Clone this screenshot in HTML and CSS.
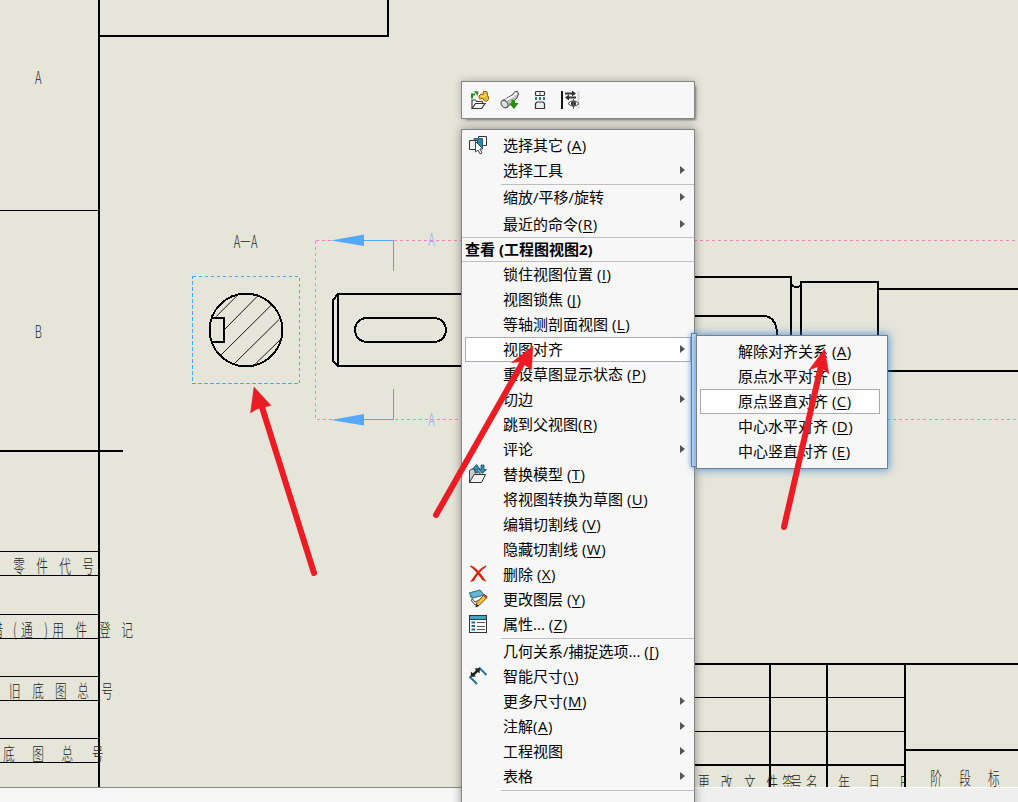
FILE: index.html
```html
<!DOCTYPE html>
<html lang="zh-CN">
<head>
<meta charset="utf-8">
<title>工程图</title>
<link rel="stylesheet" href="styles.css">
</head>
<body>
<main class="workspace">
  <svg class="sheet" viewBox="0 0 1018 802" width="1018" height="802">
    <defs>
      <clipPath id="sheet-area"><rect width="1018" height="787"/></clipPath>
      <clipPath id="date-cell"><rect x="828" y="766" width="77" height="21"/></clipPath>
    </defs>
    <!-- sheet frame and title blocks -->
    <g class="thick">
      <path d="M99 0V787M99 36H389M388 0V36M0 451H123"/>
      <path d="M690 664H1018M770 664V787M827 664V787M905 664V787M690 765H905M905 750H1018"/>
    </g>
    <path class="thin" d="M0 210.500H98M0 551.500H98M0 575.500H98M0 614.500H98M0 638.500H98M0 676.500H98M0 700.500H98M0 738.500H98M0 762.500H98M690 697.500H905M690 731.500H905"/>
    <!-- view boundaries -->
    <path class="boundary-pink" d="M315.500 240.500H1018M315.500 240.500V419.500H1018"/>
    <path class="boundary-blue" d="M192.500 276.500H299.500V383.500H192.500Z"/>
    <!-- section A-A -->
    <path class="hatch" d="M216 316.700L236.700 296M225 329L257.300 296.300M220.700 355.300L271.700 304.700M235 363L279.300 319.300M255.300 364L281.300 338.700"/>
    <g class="part">
      <circle cx="246" cy="330" r="36.300"/>
      <path d="M212 318H224V342H212"/>
      <!-- shaft -->
      <path d="M470 294H338L333 300V361L338 366H470M338 294V366"/>
      <rect x="355" y="318" width="91" height="24" rx="12"/>
      <path d="M690 277H791V350M791 284Q796 290 801 285M801 350V282H878V350M878 289H1018M878 371H1018M690 316H765Q777 318 777 335"/>
    </g>
    <!-- section cutting line -->
    <path class="cut" d="M362 240.500H393.500V271M362 419.500H393.500V389"/>
    <path class="cut-head" d="M331 240.500L364 234.500V246ZM331 420L364 414V425.500Z"/>
    <!-- drawing notes -->
    <g class="note" transform="scale(.65 1)">
      <text class="latin" x="59" y="84">A</text>
      <text class="latin" x="59" y="338">B</text>
      <text class="latin" x="364.500 377.500 391" y="248">A—A</text>
      <text class="latin pale" x="664" y="246">A</text>
      <text class="latin pale" x="664" y="426">A</text>
      <text x="29.200 64.600 100 135.400" y="573">零件代号</text>
      <text x="-4.600 23 41.500 70.800 89.200 124.600 161.500 195.400" y="637">借(通)用件登记</text>
      <text x="23 58.500 93.800 127.700 164.600" y="698">旧底图总号</text>
      <text x="13.800 58.500 103.800 150" y="761">底图总号</text>
    </g>
    <g clip-path="url(#sheet-area)">
      <g class="note" transform="scale(.65 1)">
        <text x="1083 1117.700 1153.800 1187.700 1212.300 1224.600 1249.200" y="790">更改文件签号名</text>
        <text x="1440 1484.600 1529.200" y="785">阶段标</text>
      </g>
    </g>
    <g clip-path="url(#date-cell)">
      <g class="note" transform="scale(.65 1)"><text x="1298.500 1344.600 1392" y="790">年月日</text></g>
    </g>
    <rect class="foot-left" y="787" width="470" height="15"/>
    <rect class="foot-right" x="690" y="787" width="328" height="15"/>
    <path class="foot-line" d="M0 787.500H470"/>
    <path class="foot-light" d="M690 787.500H1018"/>
  </svg>

  <section class="toolbar">
    <svg class="icon" viewBox="0 0 20 20">
      <path d="M2 8.500V4.500H5" fill="none" stroke="#278a16" stroke-width="2"/>
      <path d="M4 1L8.500 1.500L7.500 6Z" fill="#278a16"/>
      <path d="M2 18V10H5.500L6.500 11.500H12.500V13" fill="#fff" stroke="#444" stroke-width="1.200"/>
      <path d="M2 18.500L5.500 13.500H15L11.500 18.500Z" fill="#f4f4f4" stroke="#333" stroke-width="1.200"/>
      <path d="M9 6L11 4L13 4.500L13.500 1.500H16.500L17.500 3V5.500L18.500 7V9.500L16.500 11.500L14 10.500L13 8.500L10.500 9L9 8Z" fill="#efb62a" stroke="#96680b"/>
      <path d="M11 6L14 6.500L16 4" fill="none" stroke="#ffe296" stroke-width="1.200"/>
    </svg>
    <svg class="icon" viewBox="0 0 20 20">
      <path d="M2 11L12 5L15 1.500L17.500 1.500L18.500 4L17 8L7 17.500Z" fill="#bdbdbd" stroke="#555"/>
      <path d="M5 10.500L13 6.500L16.500 3" fill="none" stroke="#fff" stroke-width="2"/>
      <ellipse cx="4.500" cy="14" rx="3" ry="4" transform="rotate(-35 4.500 14)" fill="#ddd" stroke="#555"/>
      <path d="M11.500 9L15 11V13H18.500L14 19L9 13.500H11.500Z" fill="#258f0c"/>
    </svg>
    <svg class="icon" viewBox="0 0 20 20">
      <rect x="5.500" y="1.500" width="9" height="4" rx="1" fill="#fff" stroke="#333" stroke-width="1.200"/>
      <path d="M10 2V5" stroke="#555"/>
      <path d="M5 8.500H16" stroke="#237da0" stroke-width="3" stroke-dasharray="2 2"/>
      <path d="M5.500 18.500V13.500L7 12H13L14.500 13.500V18.500Z" fill="#eee" stroke="#333" stroke-width="1.200"/>
    </svg>
    <svg class="icon" viewBox="0 0 20 20">
      <path d="M2 1V19" stroke="#111" stroke-width="2"/>
      <path d="M18.500 1V19" stroke="#d6d6d6" stroke-width="2"/>
      <path d="M5 3.500H14M7 7.500H16" stroke="#333" stroke-width="1.800"/>
      <path d="M12 .5L16 3.500L12 6.500ZM9 4.500L5 7.500L9 10.500Z" fill="#333"/>
      <path d="M8 13.500Q13.500 8 19 13.500Q13.500 19 8 13.500Z" fill="#fff" stroke="#444"/>
      <circle cx="13.500" cy="13.500" r="2.500" fill="#333"/><path d="M13.500 9V19" stroke="#555"/>
    </svg>
  </section>

  <nav class="menu">
    <div class="item"><span class="slot"><svg class="icon" viewBox="0 0 20 20">
      <path d="M10.500 1.500H18.500V10.500H10.500Z" fill="#fff" stroke="#333"/>
      <path d="M6 3.500H14.500V13H6Z" fill="#2d86ad" stroke="#2a6580"/>
      <path d="M1.500 5.500H9.500V14.500H1.500Z" fill="#f2f2f2" stroke="#333"/>
      <path d="M7.500 6.500V17L10 15L12 19L14 18L12 14H15Z" fill="#fff" stroke="#444"/>
    </svg></span>选择其它 <span class="key">(<u>A</u>)</span></div>
    <div class="item sub">选择工具</div>
    <hr class="rule inset">
    <div class="item sub">缩放/平移/旋转</div>
    <div class="item sub spaced">最近的命令<span class="key">(<u>R</u>)</span></div>
    <hr class="rule">
    <h2 class="heading">查看 (工程图视图2)</h2>
    <hr class="rule">
    <div class="item">锁住视图位置 <span class="key">(<u>I</u>)</span></div>
    <div class="item">视图锁焦 <span class="key">(<u>J</u>)</span></div>
    <div class="item">等轴测剖面视图 <span class="key">(<u>L</u>)</span></div>
    <div class="item sub active">视图对齐</div>
    <div class="item">重设草图显示状态 <span class="key">(<u>P</u>)</span></div>
    <div class="item sub">切边</div>
    <div class="item">跳到父视图<span class="key">(<u>R</u>)</span></div>
    <div class="item sub">评论</div>
    <div class="item"><span class="slot"><svg class="icon" viewBox="0 0 20 20">
      <path d="M1.500 18.500V6.500L4 5H7V8H12V18Z" fill="#ccc" stroke="#444"/>
      <path d="M1.500 18.500L6 10.500H17.500L13.500 18.500Z" fill="#f2f2f2" stroke="#333"/>
      <path d="M7 9V5H4.500L8.500 .5L12 5H10V8ZM13 1H16V5.500H18.500L14.500 9.500L11 5.500H13Z" fill="#348eac" stroke="#164f69" stroke-width=".8"/>
    </svg></span>替换模型 <span class="key">(<u>T</u>)</span></div>
    <div class="item">将视图转换为草图 <span class="key">(<u>U</u>)</span></div>
    <div class="item">编辑切割线 <span class="key">(<u>V</u>)</span></div>
    <div class="item">隐藏切割线 <span class="key">(<u>W</u>)</span></div>
    <div class="item"><span class="slot"><svg class="icon" viewBox="0 0 20 20">
      <path d="M2.500 2Q8 3 17 16.500L14.500 15.500Q8 6 2.500 2ZM18 2Q11 5 3.500 17L5.500 16.500Q10 8 18 2Z" fill="#d9230b" stroke="#d9230b" stroke-width="1.200"/>
    </svg></span>删除 <span class="key">(<u>X</u>)</span></div>
    <div class="item"><span class="slot"><svg class="icon" viewBox="0 0 20 20">
      <path d="M3 11L7 16L17 10L14 7Z" fill="#ddd" stroke="#555"/>
      <path d="M2 7L7 13L17 8L13 4Z" fill="#fff" stroke="#555"/>
      <path d="M1 4L12 1L16 6L5 9Z" fill="#69b4d1" stroke="#286982"/>
      <path d="M8 17.500L9 13.500L15.500 6.500L18.500 9L11.500 16Z" fill="#f5c636" stroke="#69511d"/>
      <path d="M15 6.500L16.500 5L19.500 7.500L18.500 9.500Z" fill="#d7322b"/><path d="M7.500 18.500L8.500 15L11 17Z" fill="#222"/>
    </svg></span>更改图层 <span class="key">(<u>Y</u>)</span></div>
    <div class="item"><span class="slot"><svg class="icon" viewBox="0 0 20 20">
      <rect x="1.500" y="1.500" width="17" height="17" fill="#f8f8f8" stroke="#333"/>
      <path d="M2 3.500H18" stroke="#4ca0bd" stroke-width="3"/>
      <path d="M1.500 5.500H18.500" stroke="#164b62"/>
      <path d="M3.500 8.500H7M3.500 12H7M3.500 15.500H7" stroke="#236d91" stroke-width="2.200"/>
      <path d="M9 8.500H17M9 12.500H17M9 15.500H17" stroke="#555"/>
    </svg></span>属性... <span class="key">(<u>Z</u>)</span></div>
    <hr class="rule inset">
    <div class="item">几何关系/捕捉选项... <span class="key">(<u>[</u>)</span></div>
    <div class="item"><span class="slot"><svg class="icon" viewBox="0 0 20 20">
      <path d="M11 1.500L18.500 9M1.500 10.500L9 18" stroke="#237396" stroke-width="2"/>
      <path d="M5 9L10 4" stroke="#222" stroke-width="2.500"/>
      <path d="M2.500 11L3 5.500L8 10.500ZM12 2L11.500 7.500L6.500 2.500Z" fill="#222"/>
    </svg></span>智能尺寸<span class="key">(<u>\</u>)</span></div>
    <div class="item sub">更多尺寸<span class="key">(<u>M</u>)</span></div>
    <div class="item sub">注解<span class="key">(<u>A</u>)</span></div>
    <div class="item sub">工程视图</div>
    <div class="item sub">表格</div>
    <hr class="rule inset">
  </nav>

  <div class="flyout-tab"></div>
  <nav class="flyout">
    <div class="choice">解除对齐关系 <span class="key">(<u>A</u>)</span></div>
    <div class="choice">原点水平对齐 <span class="key">(<u>B</u>)</span></div>
    <div class="choice active">原点竖直对齐 <span class="key">(<u>C</u>)</span></div>
    <div class="choice">中心水平对齐 <span class="key">(<u>D</u>)</span></div>
    <div class="choice">中心竖直对齐 <span class="key">(<u>E</u>)</span></div>
  </nav>

  <svg class="pointers" viewBox="0 0 1018 802" width="1018" height="802">
    <path class="shaft" d="M314 573L261 404M436 515L523 362M784 527L821 366"/>
    <path class="head" d="M254 387L271 405.500L264 407L257 409L250.500 413ZM533 346L531.500 370L525 365L519 362L511.500 362.500ZM824.500 349L829 374L823 369L817 367L809 370Z"/>
  </svg>
</main>
</body>
</html>
```

FILE: styles.css
```css
* { box-sizing: border-box; }

body {
  margin: 0;
  background: #e5e5d9;
  color: #000;
  font: 15px/25px "Open Sans", "Noto Sans CJK SC", sans-serif;
}

.workspace {
  position: relative;
  width: 1018px;
  height: 802px;
  overflow: hidden;
}

.sheet { display: block; }

.thick, .part { fill: none; stroke: #000; stroke-width: 2; shape-rendering: crispEdges; }
.thin { fill: none; stroke: #000; stroke-width: 1; shape-rendering: crispEdges; }
.hatch { fill: none; stroke: #000; stroke-width: .9; }
.boundary-pink { fill: none; stroke: #ff7dc1; stroke-dasharray: 3.5 2.5; shape-rendering: crispEdges; }
.boundary-blue { fill: none; stroke: #4da6ff; stroke-dasharray: 3.5 2.5; shape-rendering: crispEdges; }
.cut { fill: none; stroke: #4da6ff; }
.cut-head { fill: #55a8ff; }

.note {
  fill: #222;
  font-family: "Noto Sans CJK SC", sans-serif;
  font-size: 18px;
  font-weight: 300;
  text-anchor: middle;
}
.note .latin { font-size: 17px; }
.note .pale { fill: #7db6ee; }

.foot-left { fill: #f7f7f7; }
.foot-right { fill: #efefef; }
.foot-line { stroke: #888; }
.foot-light { stroke: #fff; }

.toolbar, .menu, .flyout, .flyout-tab { position: absolute; border: 1px solid #858585; background: #f7f7f7; }

.toolbar {
  left: 461px;
  top: 81px;
  width: 234px;
  height: 38px;
  display: flex;
  align-items: center;
  gap: 10px;
  padding-left: 8px;
  box-shadow: 0 0 8px rgba(0, 0, 0, .25), 3px 3px 2px -2px #8d8d84;
}

.menu {
  left: 461px;
  top: 129px;
  width: 234px;
  height: 690px;
  padding-top: 3px;
  box-shadow: 0 0 9px rgba(0, 0, 0, .4);
}

.icon { display: block; width: 20px; height: 20px; flex: none; }

.item {
  position: relative;
  height: 25px;
  margin: 0 3px;
  padding-left: 38px;
  white-space: pre;
}
.item.spaced { margin-top: 2px; }

.slot { position: absolute; left: 3px; top: 2px; }

.item.sub::after {
  content: "";
  position: absolute;
  right: 6px;
  top: 8px;
  border: 4px solid transparent;
  border-left: 5px solid #555;
  border-right: 0;
}

.active { background: #fff; box-shadow: inset 0 0 0 1px #a9abb0; }

.key { letter-spacing: .5px; }
.key u { text-underline-offset: 2px; text-decoration-thickness: 1px; text-decoration-skip-ink: none; }

.rule { height: 1px; margin: 0; border: 0; background: #bfbfbf; }
.rule.inset { margin: 1px 0 0 39px; }

.heading { height: 23px; margin: 0; padding-left: 3px; font-size: 15px; line-height: 23px; font-weight: 700; }

.flyout-tab {
  left: 691px;
  top: 333px;
  width: 6px;
  height: 134px;
  background: #cfe2fa;
  border-color: #6f7f94;
  box-shadow: -1px 0 4px rgba(70, 140, 220, .5);
}

.flyout {
  left: 696px;
  top: 335px;
  width: 192px;
  height: 134px;
  padding: 3px 7px 0 3px;
  border-color: #77818d;
  box-shadow: 0 0 8px 1px rgba(50, 125, 215, .75);
}

.choice { height: 25px; padding-left: 38px; white-space: pre; }

.pointers { position: absolute; left: 0; top: 0; pointer-events: none; }
.shaft { fill: none; stroke: #ed1c24; stroke-width: 6; stroke-linecap: round; }
.head { fill: #ed1c24; stroke: #ed1c24; stroke-width: .5; }
```
